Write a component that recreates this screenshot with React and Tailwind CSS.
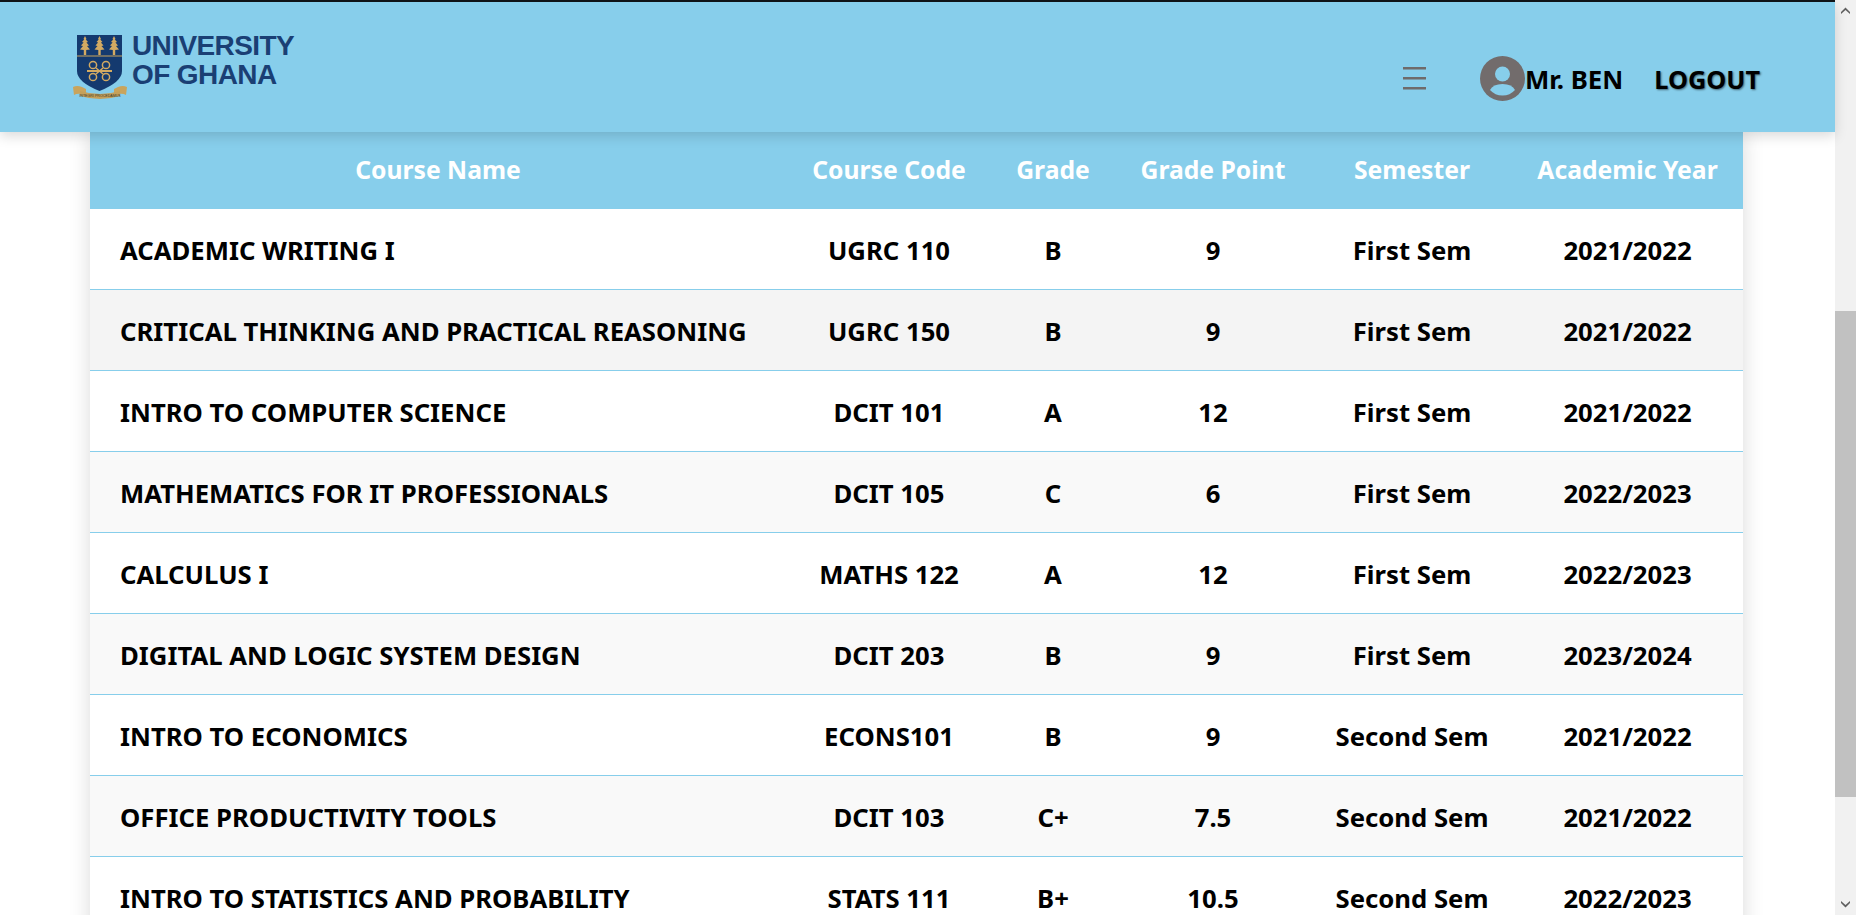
const rows = [
  ["ACADEMIC WRITING I", "UGRC 110", "B", "9", "First Sem", "2021/2022"],
  ["CRITICAL THINKING AND PRACTICAL REASONING", "UGRC 150", "B", "9", "First Sem", "2021/2022"],
  ["INTRO TO COMPUTER SCIENCE", "DCIT 101", "A", "12", "First Sem", "2021/2022"],
  ["MATHEMATICS FOR IT PROFESSIONALS", "DCIT 105", "C", "6", "First Sem", "2022/2023"],
  ["CALCULUS I", "MATHS 122", "A", "12", "First Sem", "2022/2023"],
  ["DIGITAL AND LOGIC SYSTEM DESIGN", "DCIT 203", "B", "9", "First Sem", "2023/2024"],
  ["INTRO TO ECONOMICS", "ECONS101", "B", "9", "Second Sem", "2021/2022"],
  ["OFFICE PRODUCTIVITY TOOLS", "DCIT 103", "C+", "7.5", "Second Sem", "2021/2022"],
  ["INTRO TO STATISTICS AND PROBABILITY", "STATS 111", "B+", "10.5", "Second Sem", "2022/2023"],
];
const heads = ["Course Name", "Course Code", "Grade", "Grade Point", "Semester", "Academic Year"];

function Logo() {
  return (
    <svg width="56" height="66" viewBox="0 0 56 66" className="shrink-0">
      <path d="M0 52 Q4 50 9 52 L13 54 L13 61 L9 59 Q4 58 1 60 Z" fill="#c9a45c" />
      <path d="M54 52 Q50 50 45 52 L41 54 L41 61 L45 59 Q50 58 53 60 Z" fill="#c9a45c" />
      <path d="M7 56 Q27 62 47 56 L47 61 Q27 67 7 61 Z" fill="#c4a05a" />
      <text x="27" y="62.2" textAnchor="middle" fontSize="3.6" fill="#3b3a30" fontFamily="Liberation Sans, sans-serif">INTEGRI PROCEDAMUS</text>
      <path d="M4 0 H49 V36 Q49 47 26.5 56 Q4 47 4 36 Z" fill="#143a6f" />
      <rect x="4" y="20.5" width="45" height="1" fill="#c9a45c" />
      {[12, 26.5, 41].map((x) => (
        <path key={x} d="M0 0 L1.5 3 L0.8 3.6 L3 6 L1.4 6.6 L4 9.6 L2 10 L5 13.5 L1.2 14 L1.2 19 L-1.2 19 L-1.2 14 L-5 13.5 L-2 10 L-4 9.6 L-1.4 6.6 L-3 6 L-0.8 3.6 L-1.5 3 Z" transform={`translate(${x} 1)`} fill="#d3aa62" />
      ))}
      <g fill="none" stroke="#d3aa62" strokeWidth="1.5">
        <circle cx="20" cy="30" r="3.6" />
        <circle cx="33" cy="30" r="3.6" />
        <circle cx="20" cy="42" r="3.6" />
        <circle cx="33" cy="42" r="3.6" />
        <path d="M23 33 L30 39 M30 33 L23 39" />
        <path d="M14 36 H39" strokeWidth="2" />
      </g>
    </svg>
  );
}

function Bars() {
  return (
    <svg width="23" height="23" viewBox="0 0 23 23" className="shrink-0">
      <rect x="0" y="0" width="23" height="2.5" fill="#6f6b6b" />
      <rect x="0" y="10" width="23" height="2.5" fill="#6f6b6b" />
      <rect x="0" y="20" width="23" height="2.5" fill="#6f6b6b" />
    </svg>
  );
}

function Avatar() {
  return (
    <svg width="45" height="45" viewBox="0 0 45 45" className="shrink-0">
      <circle cx="22.5" cy="22.5" r="22.5" fill="#726c6c" />
      <circle cx="22.5" cy="18" r="7.5" fill="#87ceeb" />
      <path d="M10 34 Q13 28 22.5 28 Q32 28 35 34 Q30 39.5 22.5 39.5 Q15 39.5 10 34 Z" fill="#87ceeb" />
    </svg>
  );
}

export default function App() {
  return (
    <div className="flex h-[915px] w-[1856px] overflow-hidden bg-white font-['Noto_Sans','Open_Sans',sans-serif]">
      <div className="flex min-w-0 flex-1 flex-col">
        <div className="h-[2px] shrink-0 bg-[#101418]" />
        <header className="relative z-10 flex h-[130px] shrink-0 bg-[#87ceeb] shadow-[0_4px_12px_rgba(0,0,0,0.15)]">
          <div className="ml-[73px] mt-[33px] flex items-start gap-[3px]">
            <Logo />
            <div className="-mt-[4px] font-['Liberation_Sans',sans-serif] text-[28px] font-bold leading-[29px] tracking-[-0.6px] text-[#1a3f74]">
              <div>UNIVERSITY</div>
              <div>OF GHANA</div>
            </div>
          </div>
          <div className="ml-auto mr-[75px] mt-[54px] flex h-[45px] items-center">
            <Bars />
            <div className="ml-[54px]"><Avatar /></div>
            <span className="pt-[2px] text-[25.8px] font-bold text-black">Mr. BEN</span>
            <span className="ml-[31px] pt-[2px] text-[25.3px] font-bold text-black [text-shadow:1px_1px_2px_rgba(0,0,0,0.5)]">LOGOUT</span>
          </div>
        </header>
        <main className="min-h-0 flex-1 overflow-hidden pl-[90px]">
          <table className="w-[1653px] table-fixed border-separate border-spacing-0 bg-white shadow-[0_0_20px_rgba(0,0,0,0.15)]">
            <colgroup>
              <col className="w-[696px]" />
              <col className="w-[206px]" />
              <col className="w-[122px]" />
              <col className="w-[198px]" />
              <col className="w-[200px]" />
              <col className="w-[231px]" />
            </colgroup>
            <thead>
              <tr className="h-[77px] bg-[#87ceeb]">
                {heads.map((h) => (
                  <th key={h} className="pb-[2px] text-center text-[24.7px] font-bold text-white">{h}</th>
                ))}
              </tr>
            </thead>
            <tbody>
              {rows.map((r, i) => (
                <tr key={r[0]} className={`h-[81px] ${i === 1 ? "bg-[#f4f4f4]" : i % 2 ? "bg-[#f9f9f9]" : "bg-white"}`}>
                  {r.map((c, j) => (
                    <td key={j} className={`border-b border-[#87ceeb] pt-[4px] text-[25.7px] font-bold text-black ${j === 0 ? "pl-[30px] text-left" : "text-center"}`}>{c}</td>
                  ))}
                </tr>
              ))}
            </tbody>
          </table>
        </main>
      </div>
      <div className="flex h-full w-[21px] shrink-0 flex-col items-center bg-[#f1f1f1]">
        <div className="flex h-[21px] w-full shrink-0 items-center justify-center">
          <svg width="9" height="7" viewBox="0 0 9 7"><path d="M0 5 L4.5 0.5 L9 5 L9 7 L4.5 3 L0 7 Z" fill="#5f5f5f" /></svg>
        </div>
        <div className="mt-[290px] h-[486px] w-full bg-[#c1c1c1]" />
        <div className="mt-auto flex h-[21px] w-full shrink-0 items-center justify-center">
          <svg width="9" height="7" viewBox="0 0 9 7"><path d="M0 0 L4.5 4 L9 0 L9 2 L4.5 6.5 L0 2 Z" fill="#5f5f5f" /></svg>
        </div>
      </div>
    </div>
  );
}
